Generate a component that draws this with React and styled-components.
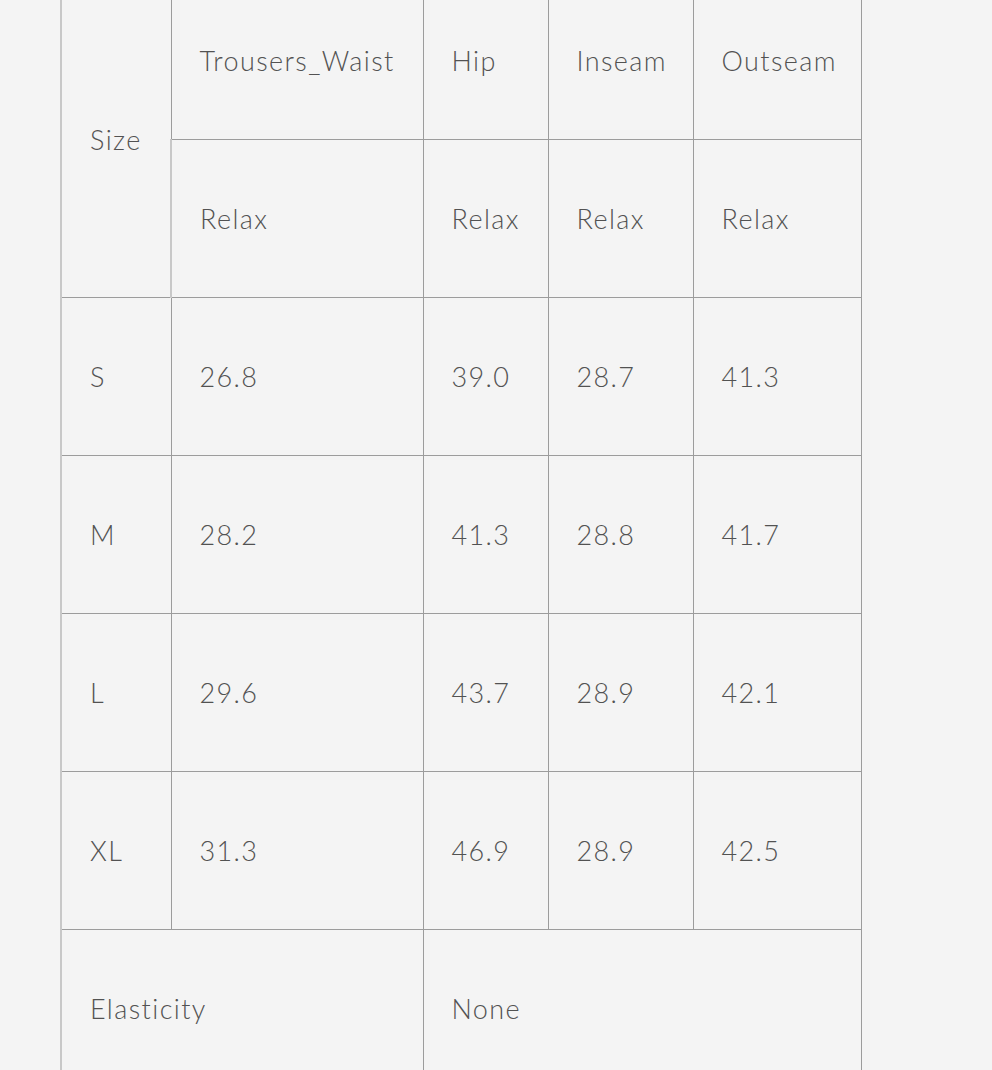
import React from 'react';
import styled, { createGlobalStyle } from 'styled-components';

const rows = [
  { size: 'S', values: ['26.8', '39.0', '28.7', '41.3'] },
  { size: 'M', values: ['28.2', '41.3', '28.8', '41.7'] },
  { size: 'L', values: ['29.6', '43.7', '28.9', '42.1'] },
  { size: 'XL', values: ['31.3', '46.9', '28.9', '42.5'] },
];

const columns = ['Trousers_Waist', 'Hip', 'Inseam', 'Outseam'];
const widths = [110, 252, 125, 145, 168];

const App = () => (
  <>
    <GlobalStyle />
    <Page>
      <Table>
        <colgroup>
          {widths.map((w, i) => (
            <Col key={i} $w={w} />
          ))}
        </colgroup>
        <tbody>
          <Row>
            <Cell rowSpan={2}>Size</Cell>
            {columns.map((c) => (
              <Cell key={c}>{c}</Cell>
            ))}
          </Row>
          <Row>
            {columns.map((c) => (
              <Cell key={c}>Relax</Cell>
            ))}
          </Row>
          {rows.map((r) => (
            <Row key={r.size}>
              <Cell>{r.size}</Cell>
              {r.values.map((v, i) => (
                <Cell key={i}>{v}</Cell>
              ))}
            </Row>
          ))}
          <Row>
            <Cell colSpan={2}>Elasticity</Cell>
            <Cell colSpan={3}>None</Cell>
          </Row>
        </tbody>
      </Table>
    </Page>
  </>
);

export default App;

const GlobalStyle = createGlobalStyle`
  html, body {
    margin: 0;
    padding: 0;
    background: #f4f4f4;
  }
`;

const Page = styled.div`
  padding-left: 60px;
  height: 1070px;
  overflow: hidden;
  font-family: Lato, "Noto Sans", sans-serif;
`;

const Table = styled.table`
  margin-top: -19px;
  width: 801px;
  table-layout: fixed;
  border-collapse: collapse;
`;

const Col = styled.col`
  width: ${(p) => p.$w}px;
`;

const Row = styled.tr`
  height: 158px;
`;

const Cell = styled.td`
  padding: 0 0 0 28px;
  border: 1.5px solid #9c9c9c;
  color: #525252;
  font-size: 27px;
  font-weight: 300;
  letter-spacing: 1.4px;
  vertical-align: middle;
  white-space: nowrap;

  &:first-child {
    border-left: 2px solid #c8c8c8;
  }
`;
